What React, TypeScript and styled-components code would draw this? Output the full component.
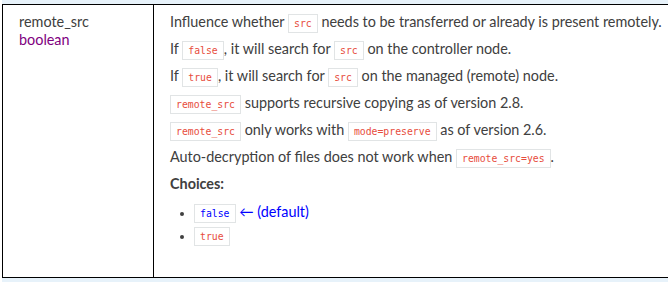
import React from "react";
import styled, { createGlobalStyle } from "styled-components";

const Global = createGlobalStyle`
  html, body { margin: 0; padding: 0; background: #fff; overflow: hidden; }
  body { font-family: Lato, "Open Sans", sans-serif; font-size: 14.4px; color: #404040; }
`;

const Page = styled.div`
  width: 668px;
  height: 283px;
  overflow: hidden;
  padding-left: 2px;
  box-sizing: border-box;
`;

const Table = styled.div`
  width: 900px;
  display: flex;
  flex-direction: column;
`;

const StripeRow = styled.div`
  height: 4px;
  background: #e7f2fa;
`;

const Row = styled.div`
  display: grid;
  grid-template-columns: 151px 1fr;
  border-top: 1px solid #000;
  border-bottom: 1px solid #000;
  border-left: 1px solid #000;
  height: 274px;
  box-sizing: border-box;
`;

const NameCell = styled.div`
  padding: 8px 16px;
  border-right: 1px solid #000;
  line-height: 18px;
`;

const Name = styled.div`
  color: #404040;
`;

const Type = styled.div`
  color: purple;
`;

const DescCell = styled.div`
  padding: 5px 16px 0 16px;
`;

const P = styled.p`
  margin: 0 0 3px 0;
  line-height: 24px;
`;

const Code = styled.code<{ $blue?: boolean }>`
  font-family: "DejaVu Sans Mono", "Liberation Mono", monospace;
  font-size: 9.8px;
  line-height: 1;
  color: ${(p) => (p.$blue ? "#0000ff" : "#e74c3c")};
  background: #fff;
  border: 1px solid #e1e4e5;
  padding: 3px 5px;
  white-space: nowrap;
`;

const Strong = styled.p`
  margin: 0 0 4px 0;
  line-height: 24px;
  font-weight: 700;
`;

const List = styled.ul`
  margin: 0;
  padding: 0 0 0 24px;
  list-style: disc;
`;

const Item = styled.li`
  line-height: 23px;
  &::marker { font-size: 11px; }
`;

const Default = styled.span`
  color: #0000ff;
`;

export default function App() {
  return (
    <Page>
      <Global />
      <Table>
        <StripeRow />
        <Row>
          <NameCell>
            <Name>remote_src</Name>
            <Type>boolean</Type>
          </NameCell>
          <DescCell>
            <P>
              Influence whether <Code>src</Code> needs to be transferred or already is present remotely.
            </P>
            <P>
              If <Code>false</Code>, it will search for <Code>src</Code> on the controller node.
            </P>
            <P>
              If <Code>true</Code>, it will search for <Code>src</Code> on the managed (remote) node.
            </P>
            <P>
              <Code>remote_src</Code> supports recursive copying as of version 2.8.
            </P>
            <P>
              <Code>remote_src</Code> only works with <Code>mode=preserve</Code> as of version 2.6.
            </P>
            <P>
              Auto-decryption of files does not work when <Code>remote_src=yes</Code>.
            </P>
            <Strong>Choices:</Strong>
            <List>
              <Item>
                <Code $blue>false</Code> <Default>← (default)</Default>
              </Item>
              <Item>
                <Code>true</Code>
              </Item>
            </List>
          </DescCell>
        </Row>
        <StripeRow />
      </Table>
    </Page>
  );
}
